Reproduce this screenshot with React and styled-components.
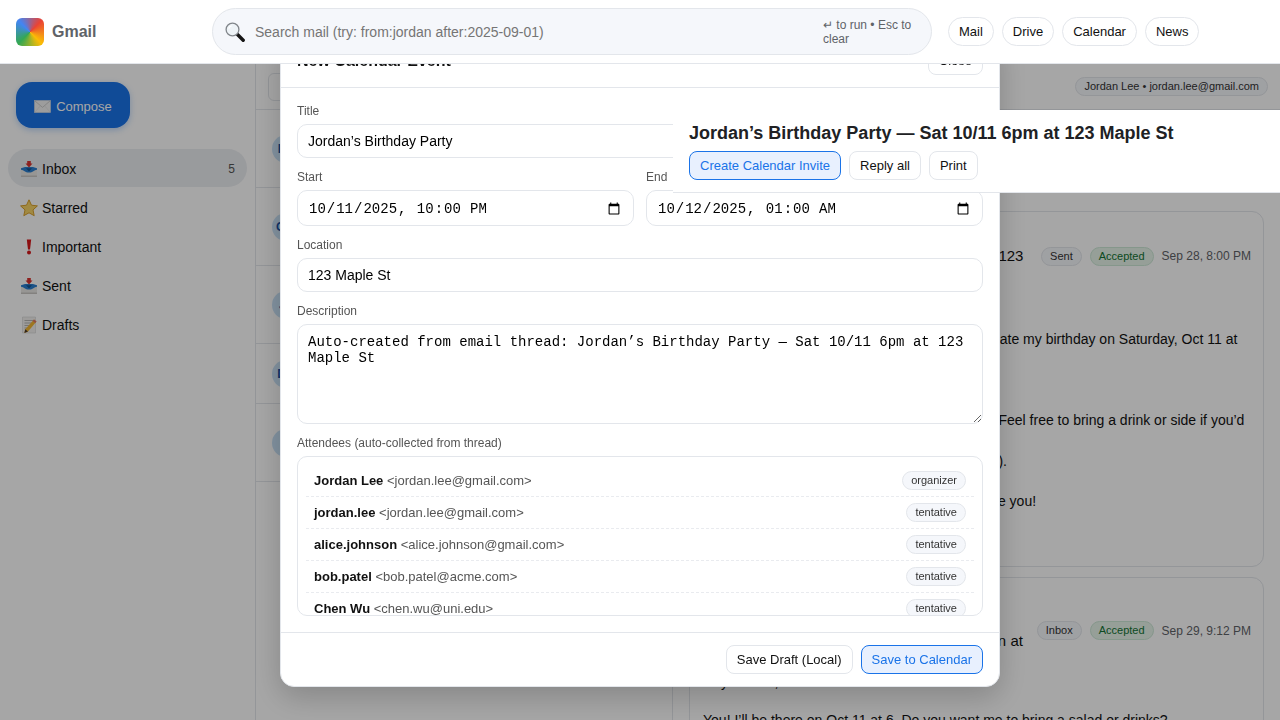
import React from 'react';
import styled, { createGlobalStyle } from 'styled-components';

const GlobalStyle = createGlobalStyle`
  * { box-sizing: border-box; }
  html, body { margin: 0; height: 100%; overflow: hidden; }
  body {
    font-family: "Liberation Sans", Arial, sans-serif;
    color: #111;
    background: #fff;
  }
`;

const Shell = styled.div`
  height: 100vh;
  display: flex;
  flex-direction: column;
  overflow: hidden;
`;

const TopBar = styled.header`
  position: relative;
  z-index: 100;
  flex: 0 0 64px;
  display: flex;
  align-items: center;
  padding: 0 16px;
  gap: 16px;
  background: #fff;
  border-bottom: 1px solid #e3e6eb;
`;

const Brand = styled.div`
  flex: 0 0 180px;
  display: flex;
  align-items: center;
  gap: 8px;
  font-size: 16px;
  font-weight: 700;
  color: #5f6368;
`;

const Logo = styled.div`
  width: 28px;
  height: 28px;
  border-radius: 6px;
  background: conic-gradient(from 45deg, #ea4335, #fbbc05, #34a853, #4285f4, #ea4335);
`;

const SearchBox = styled.div`
  flex: 0 0 720px;
  height: 47px;
  display: flex;
  align-items: center;
  gap: 10px;
  padding: 0 16px 0 12px;
  background: #f5f7fb;
  border: 1px solid #e3e6eb;
  border-radius: 24px;
`;

const SearchInput = styled.input`
  flex: 1;
  min-width: 0;
  border: none;
  outline: none;
  padding: 0;
  background: transparent;
  font: 14px "Liberation Sans", Arial, sans-serif;
`;

const SearchHint = styled.div`
  flex: 0 0 92px;
  margin-left: 2px;
  font-size: 12px;
  line-height: 14px;
  color: #5f6368;
`;

const Pills = styled.nav`
  display: flex;
  gap: 8px;
`;

const Pill = styled.button`
  height: 29px;
  padding: 0 10px;
  background: #fff;
  border: 1px solid #e3e6eb;
  border-radius: 999px;
  color: #111;
  font: 13px "Liberation Sans", Arial, sans-serif;
`;

const Main = styled.div`
  flex: 1;
  min-height: 0;
  display: flex;
`;

const Sidebar = styled.aside`
  flex: 0 0 256px;
  padding: 18px 8px 0;
  border-right: 1px solid #e3e6eb;
`;

const Compose = styled.button`
  height: 46px;
  width: 114px;
  margin: 0 0 21px 8px;
  padding: 2px 0 0;
  display: flex;
  align-items: center;
  justify-content: center;
  gap: 5px;
  background: #1a73e8;
  border: none;
  border-radius: 16px;
  box-shadow: 0 2px 6px rgba(26, 115, 232, 0.3);
  color: #fff;
  font: 13px "Liberation Sans", Arial, sans-serif;
`;

const NavList = styled.div`
  display: flex;
  flex-direction: column;
  gap: 1px;
  width: 239px;
`;

const NavItem = styled.div`
  height: 38px;
  display: flex;
  align-items: center;
  gap: 4px;
  padding: 2px 12px 0;
  border-radius: 19px;
  font-size: 14px;
  background: ${(p) => (p.$active ? '#eceef2' : 'transparent')};
`;

const Count = styled.span`
  margin-left: auto;
  font-size: 12px;
  color: #555;
`;

const ListPane = styled.section`
  flex: 0 0 417px;
  border-right: 1px solid #e3e6eb;
`;

const ListHead = styled.div`
  height: 46px;
  padding: 9px 12px 8px;
  border-bottom: 1px solid #e3e6eb;
`;

const ListFilter = styled.div`
  height: 28px;
  border: 1px solid #e3e6eb;
  border-radius: 6px;
`;

const ThreadRow = styled.div`
  height: ${(p) => p.$h}px;
  display: flex;
  align-items: center;
  padding: 0 16px;
  border-bottom: 1px solid #e3e6eb;
`;

const Avatar = styled.div`
  width: 28px;
  height: 28px;
  display: flex;
  align-items: center;
  justify-content: center;
  border-radius: 50%;
  background: #c9e2f7;
  color: #1a4fa0;
  font-size: 12px;
  font-weight: 700;
`;

const DetailPane = styled.section`
  flex: 1;
  min-width: 0;
  overflow: hidden;
`;

const DetailBar = styled.div`
  height: 46px;
  display: flex;
  align-items: center;
  justify-content: flex-end;
  padding: 0 12px;
  border-bottom: 1px solid #e3e6eb;
`;

const DetailHead = styled.div`
  position: sticky;
  top: 0;
  z-index: 60;
  height: 83px;
  padding: 12px 16px 0;
  background: #fff;
  border-bottom: 1px solid #e3e6eb;
`;

const ThreadTitle = styled.h1`
  margin: 0 0 7px;
  font-size: 18px;
  line-height: 22px;
  font-weight: 700;
  color: #202124;
`;

const ButtonRow = styled.div`
  display: flex;
  justify-content: ${(p) => (p.$end ? 'flex-end' : 'flex-start')};
  gap: 8px;
`;

const Button = styled.button`
  height: 29px;
  padding: 0 10px;
  background: ${(p) => (p.$primary ? '#e8f0fe' : '#fff')};
  border: 1px solid ${(p) => (p.$primary ? '#1a73e8' : '#e3e6eb')};
  border-radius: 8px;
  color: ${(p) => (p.$primary ? '#1a73e8' : '#111')};
  font: 13px "Liberation Sans", Arial, sans-serif;
`;

const Thread = styled.div`
  padding: 18px 16px;
  display: flex;
  flex-direction: column;
  gap: 10px;
`;

const MessageCard = styled.article`
  flex: none;
  padding: ${(p) => p.$top}px 12px 14px 13px;
  background: #fff;
  border: 1px solid #e3e6eb;
  border-radius: 12px;
`;

const MessageHead = styled.div`
  display: flex;
  align-items: center;
  gap: 10px;
  margin-bottom: 2px;
`;

const MessageFrom = styled.div`
  flex: 1;
  min-width: 0;
  font-size: 14px;
  line-height: 20.25px;
`;

const Subject = styled.div`
  font-size: 15px;
`;

const Meta = styled.div`
  flex: none;
  display: flex;
  align-items: center;
  gap: 8px;
  font-size: 12px;
  color: #5f6368;
`;

const Chip = styled.span`
  display: inline-block;
  padding: 0 8px;
  height: 19px;
  line-height: 17px;
  font-size: 11px;
  white-space: nowrap;
  color: ${(p) => (p.$green ? '#137333' : '#333')};
  background: ${(p) => (p.$green ? '#e6f4ea' : '#f5f7fb')};
  border: 1px solid ${(p) => (p.$green ? '#cde8d6' : '#e3e6eb')};
  border-radius: 999px;
`;

const MessageBody = styled.div`
  font-size: 14px;
  line-height: ${(p) => p.$lh}px;
  white-space: pre-line;
`;

const Overlay = styled.div`
  position: fixed;
  inset: 0;
  z-index: 50;
  display: flex;
  align-items: center;
  justify-content: center;
  background: rgba(0, 0, 0, 0.35);
`;

const Modal = styled.div`
  width: 720px;
  height: 654px;
  display: flex;
  flex-direction: column;
  background: #fff;
  border: 1px solid #e3e6eb;
  border-radius: 14px;
  box-shadow: 0 10px 30px rgba(0, 0, 0, 0.2);
  overflow: hidden;
`;

const ModalHead = styled.div`
  display: flex;
  align-items: center;
  justify-content: space-between;
  padding: 12px 16px 12px;
  border-bottom: 1px solid #e3e6eb;
`;

const ModalTitle = styled.h2`
  margin: 0;
  font-size: 16px;
  font-weight: 700;
`;

const ModalBody = styled.div`
  flex: 1;
  min-height: 0;
  padding: 16px;
  display: flex;
  flex-direction: column;
  gap: 12px;
`;

const Field = styled.label`
  display: flex;
  flex-direction: column;
  gap: 6px;
  min-width: 0;
`;

const FieldLabel = styled.span`
  font-size: 12px;
  line-height: 14px;
  color: #555;
`;

const TextInput = styled.input`
  width: 100%;
  padding: 8px 10px;
  border: 1px solid #e3e6eb;
  border-radius: 10px;
  outline: none;
  background: #fff;
  color: #000;
  font: 14px "Liberation Sans", Arial, sans-serif;
`;

const DateInput = styled(TextInput)`
  height: 36px;
  padding: 9px 10px 7px;
  font-family: "Liberation Mono", monospace;
  &::-webkit-datetime-edit-hour-field { margin-left: 1px; }
  &::-webkit-datetime-edit-ampm-field { margin-left: 3px; }
`;

const TextArea = styled.textarea`
  display: block;
  width: 100%;
  height: 100px;
  padding: 9px 10px 7px;
  border: 1px solid #e3e6eb;
  border-radius: 10px;
  outline: none;
  color: #000;
  font: 14px "Liberation Mono", monospace;
`;

const DateRow = styled.div`
  display: grid;
  grid-template-columns: 1fr 1fr;
  gap: 12px;
`;

const AttendeeList = styled.div`
  height: 160px;
  padding: 8px;
  border: 1px solid #e3e6eb;
  border-radius: 10px;
  overflow: hidden;
`;

const AttendeeRow = styled.div`
  height: 32px;
  display: flex;
  align-items: center;
  justify-content: space-between;
  padding: 0 8px;
  font-size: 13px;
  color: #555;
  border-bottom: 1px dashed #e9ebef;
  strong { color: #111; }
`;

const ModalFoot = styled.div`
  padding: 12px 16px;
  border-top: 1px solid #e3e6eb;
`;

const EmojiBox = styled.svg`
  flex: none;
  display: block;
`;

const TrayIcon = () => (
  <EmojiBox width="18" height="18" viewBox="0 0 18 18">
    <path d="M1 9.5h16V17H1z" fill="#e9e7e4" />
    <path d="M1 15.5h16V17H1z" fill="#c9c7c4" />
    <path d="M1 8.2 5 7h8l4 1.2v1.6c-3 .2-4 2.8-8 2.8S4 10 1 9.8z" fill="#2a7fd0" />
    <path d="M6 8.2h6L9 11.4z" fill="#16548f" />
    <path d="M7.2 1h3.6v2.4h1.7L9 7.4 5.5 3.4h1.7z" fill="#d9322e" />
  </EmojiBox>
);

const StarIcon = () => (
  <EmojiBox width="18" height="18" viewBox="0 0 18 18">
    <path
      d="M9 .8l2.5 5.4 5.9.7-4.4 4 1.2 5.8L9 13.8l-5.2 2.9L5 10.9.6 6.9l5.9-.7z"
      fill="#f8d568"
      stroke="#d9a02a"
      strokeWidth="1"
      strokeLinejoin="round"
    />
  </EmojiBox>
);

const BangIcon = () => (
  <EmojiBox width="18" height="18" viewBox="0 0 18 18">
    <path d="M6.800 1.500h4.400L10 11.400H8z" fill="#d8171a" />
    <circle cx="9" cy="14.400" r="2" fill="#d8171a" />
  </EmojiBox>
);

const MemoIcon = () => (
  <EmojiBox width="18" height="18" viewBox="0 0 18 18">
    <path d="M2.500 1h13v16h-13z" fill="#f1f0ee" stroke="#c8c8c8" strokeWidth=".5" />
    <path d="M4.500 4.500h9M4.500 7h9M4.500 9.500h6M4.500 12h4" stroke="#9a9a9a" strokeWidth=".7" />
    <path d="M14 3.500l2.500 2L8 15.500l-3.600 1.400.8-3.600z" fill="#f2b632" />
    <path d="M14 3.500l2.500 2-1.300 1.500-2.500-2z" fill="#e0736a" />
    <path d="M5.200 13.300l-.8 3.600L8 15.500z" fill="#4c3a2a" />
  </EmojiBox>
);

const EnvelopeIcon = () => (
  <EmojiBox width="17" height="13" viewBox="0 0 17 13">
    <rect x=".5" y=".5" width="16" height="12" fill="#f2f2f2" stroke="#dcdcdc" strokeWidth=".6" />
    <path d="M.8.8l7.700 6.600L16.200.8" fill="none" stroke="#c6c6c6" strokeWidth=".9" />
    <path d="M.8 12.200l5.600-6.400M16.200 12.200l-5.600-6.400" fill="none" stroke="#dcdcdc" strokeWidth=".6" />
  </EmojiBox>
);

const MagnifierIcon = () => (
  <EmojiBox width="20" height="20" viewBox="0 0 20 20">
    <line x1="12.500" y1="12.500" x2="18.200" y2="18.200" stroke="#151515" strokeWidth="3.400" strokeLinecap="round" />
    <circle cx="7.500" cy="7.500" r="6.400" fill="#eef3f7" stroke="#80858a" strokeWidth="1.300" />
    <path d="M3.800 6.600a4 4 0 0 1 2.800-2.800" fill="none" stroke="#ffffff" strokeWidth="1.300" />
  </EmojiBox>
);

const navItems = [
  { label: 'Inbox', icon: <TrayIcon />, count: 5, active: true },
  { label: 'Starred', icon: <StarIcon /> },
  { label: 'Important', icon: <BangIcon /> },
  { label: 'Sent', icon: <TrayIcon /> },
  { label: 'Drafts', icon: <MemoIcon /> },
];

const threads = [
  { id: 1, initials: 'BP', h: 78 },
  { id: 2, initials: 'CW', h: 78 },
  { id: 3, initials: 'JL', h: 78 },
  { id: 4, initials: 'DK', h: 60 },
  { id: 5, initials: 'T', h: 78 },
];

const attendees = [
  { name: 'Jordan Lee', email: 'jordan.lee@gmail.com', role: 'organizer' },
  { name: 'jordan.lee', email: 'jordan.lee@gmail.com', role: 'tentative' },
  { name: 'alice.johnson', email: 'alice.johnson@gmail.com', role: 'tentative' },
  { name: 'bob.patel', email: 'bob.patel@acme.com', role: 'tentative' },
  { name: 'Chen Wu', email: 'chen.wu@uni.edu', role: 'tentative' },
];

const firstBody = `Hi everyone,

You’re all invited! Please join us all as we celebrate my birthday on Saturday, Oct 11 at
6pm at 123 Maple St.

Dinner and cake.
We’ll have plenty of food and music and cakes. Feel free to bring a drink or side if you’d
like.
Please RSVP by replying to this email (by Oct 5).

Hope you can make it, we really can’t wait to see you!

Jordan`;

const secondBody = `Hey Jordan,

You! I’ll be there on Oct 11 at 6. Do you want me to bring a salad or drinks?`;

export default function App() {
  return (
    <Shell>
      <GlobalStyle />
      <TopBar>
        <Brand>
          <Logo />
          Gmail
        </Brand>
        <SearchBox>
          <MagnifierIcon />
          <SearchInput placeholder="Search mail (try: from:jordan after:2025-09-01)" />
          <SearchHint>↵ to run • Esc to clear</SearchHint>
        </SearchBox>
        <Pills>
          {['Mail', 'Drive', 'Calendar', 'News'].map((p) => (
            <Pill key={p}>{p}</Pill>
          ))}
        </Pills>
      </TopBar>

      <Main>
        <Sidebar>
          <Compose>
            <EnvelopeIcon />
            Compose
          </Compose>
          <NavList>
            {navItems.map((item) => (
              <NavItem key={item.label} $active={item.active}>
                {item.icon}
                {item.label}
                {item.count && <Count>{item.count}</Count>}
              </NavItem>
            ))}
          </NavList>
        </Sidebar>

        <ListPane>
          <ListHead>
            <ListFilter />
          </ListHead>
          {threads.map((t) => (
            <ThreadRow key={t.id} $h={t.h}>
              <Avatar>{t.initials}</Avatar>
            </ThreadRow>
          ))}
        </ListPane>

        <DetailPane>
          <DetailBar>
            <Chip>Jordan Lee • jordan.lee@gmail.com</Chip>
          </DetailBar>
          <DetailHead>
            <ThreadTitle>Jordan’s Birthday Party — Sat 10/11 6pm at 123 Maple St</ThreadTitle>
            <ButtonRow>
              <Button $primary>Create Calendar Invite</Button>
              <Button>Reply all</Button>
              <Button>Print</Button>
            </ButtonRow>
          </DetailHead>
          <Thread>
            <MessageCard $top={14}>
              <MessageHead>
                <MessageFrom>
                  <strong>Jordan Lee</strong>
                  <Subject>Jordan’s Birthday Party — Sat 10/11 6pm at 123 Maple St</Subject>
                </MessageFrom>
                <Meta>
                  <Chip>Sent</Chip>
                  <Chip $green>Accepted</Chip>
                  Sep 28, 8:00 PM
                </Meta>
              </MessageHead>
              <MessageBody $lh={20.25}>{firstBody}</MessageBody>
            </MessageCard>
            <MessageCard $top={12}>
              <MessageHead>
                <MessageFrom>
                  <strong>alice.johnson</strong>
                  <br />
                  alice.johnson@gmail.com
                  <Subject>
                    Re: Jordan’s Birthday Party — big celebration at
                    <br />
                    123 Maple St
                  </Subject>
                </MessageFrom>
                <Meta>
                  <Chip>Inbox</Chip>
                  <Chip $green>Accepted</Chip>
                  Sep 29, 9:12 PM
                </Meta>
              </MessageHead>
              <MessageBody $lh={19}>{secondBody}</MessageBody>
            </MessageCard>
          </Thread>
        </DetailPane>
      </Main>

      <Overlay>
        <Modal>
          <ModalHead>
            <ModalTitle>New Calendar Event</ModalTitle>
            <Button>Close</Button>
          </ModalHead>
          <ModalBody>
            <Field>
              <FieldLabel>Title</FieldLabel>
              <TextInput defaultValue="Jordan’s Birthday Party" />
            </Field>
            <DateRow>
              <Field>
                <FieldLabel>Start</FieldLabel>
                <DateInput type="datetime-local" defaultValue="2025-10-11T22:00" />
              </Field>
              <Field>
                <FieldLabel>End</FieldLabel>
                <DateInput type="datetime-local" defaultValue="2025-10-12T01:00" />
              </Field>
            </DateRow>
            <Field>
              <FieldLabel>Location</FieldLabel>
              <TextInput defaultValue="123 Maple St" />
            </Field>
            <Field>
              <FieldLabel>Description</FieldLabel>
              <TextArea defaultValue="Auto-created from email thread: Jordan’s Birthday Party — Sat 10/11 6pm at 123 Maple St" />
            </Field>
            <Field as="div">
              <FieldLabel>Attendees (auto-collected from thread)</FieldLabel>
              <AttendeeList>
                {attendees.map((a) => (
                  <AttendeeRow key={a.name}>
                    <span>
                      <strong>{a.name}</strong> &lt;{a.email}&gt;
                    </span>
                    <Chip>{a.role}</Chip>
                  </AttendeeRow>
                ))}
              </AttendeeList>
            </Field>
          </ModalBody>
          <ModalFoot>
            <ButtonRow $end>
              <Button>Save Draft (Local)</Button>
              <Button $primary>Save to Calendar</Button>
            </ButtonRow>
          </ModalFoot>
        </Modal>
      </Overlay>
    </Shell>
  );
}
